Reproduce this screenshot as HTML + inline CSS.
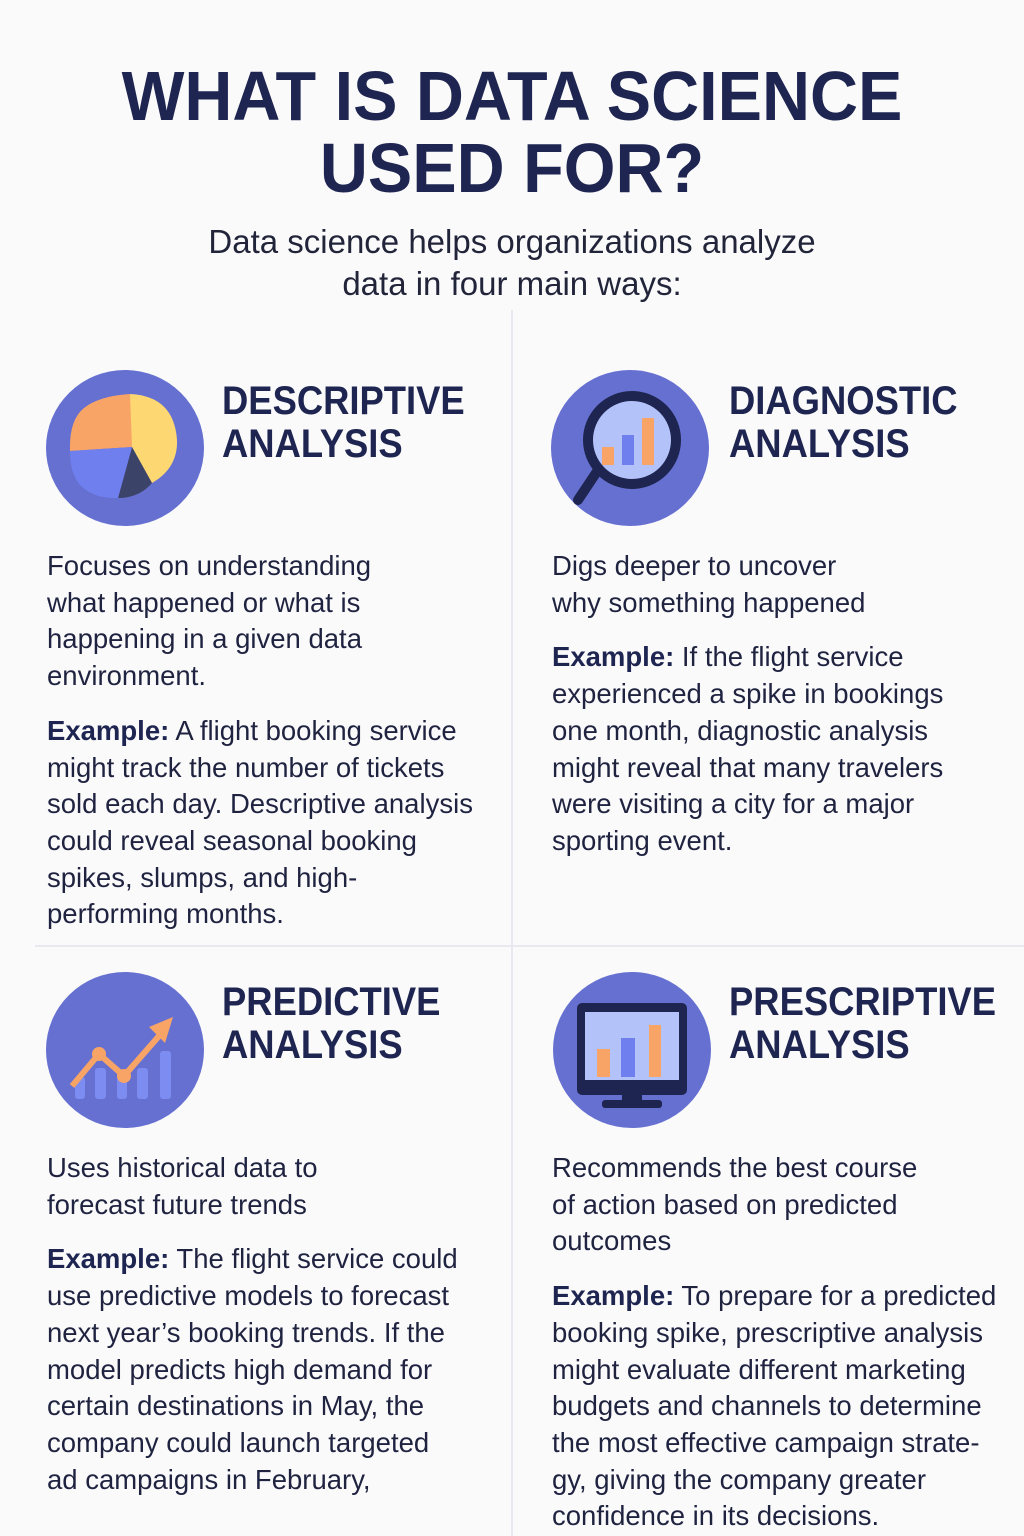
<!DOCTYPE html>
<html><head><meta charset="utf-8"><style>
body{margin:0;width:1024px;height:1536px;background:#fafafb;overflow:hidden;position:relative;font-family:"Liberation Sans",sans-serif;color:#1f2340}
.t{position:absolute;left:0;width:1024px;text-align:center}
h1{position:absolute;left:0;top:60px;width:1024px;margin:0;text-align:center;font-size:70px;line-height:72px;font-weight:bold;color:#1e2550;transform:scaleX(0.95)}
.sub{top:221px;font-size:33px;line-height:42px;color:#22253a}
.h{position:absolute;margin:0;font-size:40px;line-height:43px;font-weight:bold;color:#1e2550;transform:scaleX(0.91);transform-origin:left top;white-space:nowrap}
.p{position:absolute;font-size:27.5px;line-height:36.7px;color:#1f2340;white-space:nowrap}
.p b{color:#1e2550}
.gap{height:18px}
svg{position:absolute}
</style></head><body>
<div style="position:absolute;left:511px;top:310px;width:2px;height:1226px;background:#e8e8ee"></div>
<div style="position:absolute;left:35px;top:945px;width:989px;height:2px;background:#e8e8ee"></div>
<h1>WHAT IS DATA SCIENCE<br>USED FOR?</h1>
<div class="t sub">Data science helps organizations analyze<br>data in four main ways:</div>

<svg style="left:44px;top:368px" width="162" height="160" viewBox="0 0 162 160">
<ellipse cx="81" cy="80" rx="79" ry="78" fill="#6670d0"/>
<path d="M108,115 L88,79 L26,83 Q25,52 40,40 Q55,28 86,26 Z" fill="#f8a466"/>
<path d="M86,26 Q130,28 133,72 Q134,100 108,115 L88,79 Z" fill="#fdd872"/>
<path d="M88,79 L108,115 Q95,130 74,130 Z" fill="#3c4368"/>
<path d="M26,83 L88,79 L74,130 Q50,131 36,117 Q26,105 26,83 Z" fill="#6f80ee"/>
</svg>
<div class="h" style="left:222px;top:380px">DESCRIPTIVE<br>ANALYSIS</div>
<div class="p" style="left:47px;top:548px">Focuses on understanding<br>what happened or what is<br>happening in a given data<br>environment.<div class="gap"></div><b>Example:</b> A flight booking service<br>might track the number of tickets<br>sold each day. Descriptive analysis<br>could reveal seasonal booking<br>spikes, slumps, and high-<br>performing months.</div>

<svg style="left:550px;top:368px" width="162" height="160" viewBox="0 0 162 160">
<ellipse cx="80" cy="80" rx="79" ry="78" fill="#6670d0"/>
<line x1="48" y1="102" x2="28" y2="132" stroke="#1e2550" stroke-width="10" stroke-linecap="round"/>
<circle cx="82" cy="72" r="44" fill="#b4c2fa" stroke="#1e2550" stroke-width="10"/>
<rect x="52" y="79" width="12" height="18" fill="#f8a466"/>
<rect x="72" y="67" width="12" height="30" fill="#6f80ee"/>
<rect x="92" y="50" width="12" height="47" fill="#f8a466"/>
</svg>
<div class="h" style="left:729px;top:380px">DIAGNOSTIC<br>ANALYSIS</div>
<div class="p" style="left:552px;top:548px">Digs deeper to uncover<br>why something happened<div class="gap"></div><b>Example:</b> If the flight service<br>experienced a spike in bookings<br>one month, diagnostic analysis<br>might reveal that many travelers<br>were visiting a city for a major<br>sporting event.</div>

<svg style="left:45px;top:970px" width="162" height="160" viewBox="0 0 162 160">
<ellipse cx="80" cy="80" rx="79" ry="78" fill="#6670d0"/>
<g fill="#7d8cf0"><rect x="30" y="107" width="10" height="22" rx="3"/><rect x="50" y="98" width="11" height="31" rx="3"/><rect x="72" y="106" width="10" height="23" rx="3"/><rect x="92" y="98" width="11" height="31" rx="3"/><rect x="115" y="81" width="11" height="48" rx="3"/></g>
<polyline points="27,116 54,84 79,106 114,66" fill="none" stroke="#f8a466" stroke-width="6"/>
<polygon points="128,47 104,57 120,73" fill="#f8a466"/>
<circle cx="54" cy="84" r="7" fill="#f8a466"/><circle cx="79" cy="106" r="7" fill="#f8a466"/>
</svg>
<div class="h" style="left:222px;top:981px">PREDICTIVE<br>ANALYSIS</div>
<div class="p" style="left:47px;top:1150px">Uses historical data to<br>forecast future trends<div class="gap"></div><b>Example:</b> The flight service could<br>use predictive models to forecast<br>next year’s booking trends. If the<br>model predicts high demand for<br>certain destinations in May, the<br>company could launch targeted<br>ad campaigns in February,</div>

<svg style="left:552px;top:970px" width="162" height="160" viewBox="0 0 162 160">
<ellipse cx="80" cy="80" rx="79" ry="78" fill="#6670d0"/>
<rect x="25" y="33" width="110" height="92" rx="5" fill="#1e2550"/>
<rect x="33" y="42" width="94" height="68" fill="#b4c2fa"/>
<rect x="45" y="79" width="13" height="28" fill="#f8a466"/>
<rect x="69" y="68" width="14" height="39" fill="#6f80ee"/>
<rect x="97" y="55" width="12" height="52" fill="#f8a466"/>
<rect x="70" y="124" width="20" height="8" fill="#1e2550"/>
<rect x="50" y="130" width="60" height="8" rx="3" fill="#1e2550"/>
</svg>
<div class="h" style="left:729px;top:981px">PRESCRIPTIVE<br>ANALYSIS</div>
<div class="p" style="left:552px;top:1150px">Recommends the best course<br>of action based on predicted<br>outcomes<div class="gap"></div><b>Example:</b> To prepare for a predicted<br>booking spike, prescriptive analysis<br>might evaluate different marketing<br>budgets and channels to determine<br>the most effective campaign strate-<br>gy, giving the company greater<br>confidence in its decisions.</div>
</body></html>
